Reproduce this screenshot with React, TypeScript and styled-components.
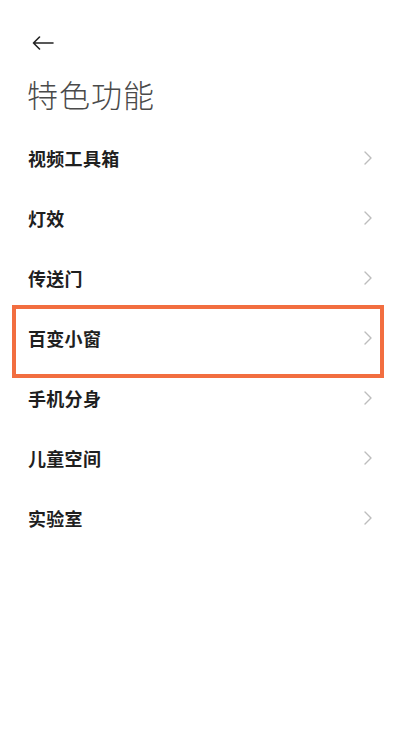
import React from 'react'
import styled, { createGlobalStyle } from 'styled-components'

const GlobalStyle = createGlobalStyle`
  html, body {
    margin: 0;
    padding: 0;
    background: #fff;
  }
  body {
    font-family: "Noto Sans CJK SC", "Noto Sans", sans-serif;
  }
`

const Page = styled.div`
  width: 401px;
  min-height: 755px;
  background: #fff;
`

const Header = styled.header`
  height: 128px;
  display: flex;
  flex-direction: column;
`

const BackButton = styled.button`
  margin: 32px 0 0 30px;
  width: 26px;
  height: 22px;
  padding: 0;
  border: none;
  background: none;
  display: flex;
  align-items: center;
  justify-content: center;
  color: #222;
`

const Title = styled.h1`
  margin: 18px 0 0 27px;
  font-size: 31px;
  line-height: 44px;
  font-weight: 300;
  color: #4a4a4a;
  letter-spacing: 1px;
`

const List = styled.ul`
  list-style: none;
  margin: 0;
  padding: 0;
`

const Row = styled.li<{ $highlight?: boolean }>`
  position: relative;
  height: 60px;
  display: flex;
  align-items: center;
  justify-content: space-between;
  padding: 0 29px 0 28px;

  ${({ $highlight }) =>
    $highlight &&
    `
    &::after {
      content: '';
      position: absolute;
      left: 12px;
      right: 17px;
      top: -3px;
      bottom: -10px;
      border: 4px solid #f26e40;
    }
  `}
`

const Label = styled.span`
  font-size: 18px;
  font-weight: 700;
  color: #1f1f1f;
  letter-spacing: 0.3px;
`

const Chevron = styled.svg`
  width: 8px;
  height: 14px;
  color: #bdbdbd;
`

const items = ['视频工具箱', '灯效', '传送门', '百变小窗', '手机分身', '儿童空间', '实验室']

const App: React.FunctionComponent = () => (
  <Page>
    <GlobalStyle />
    <Header>
      <BackButton aria-label="返回">
        <svg width="22" height="14" viewBox="0 0 22 14" fill="none">
          <path d="M21 7H1.5M7.5 1L1.5 7l6 6" stroke="currentColor" strokeWidth="1.6" strokeLinecap="round" strokeLinejoin="round" />
        </svg>
      </BackButton>
      <Title>特色功能</Title>
    </Header>
    <List>
      {items.map(item => (
        <Row key={item} $highlight={item === '百变小窗'}>
          <Label>{item}</Label>
          <Chevron viewBox="0 0 8 14" fill="none">
            <path d="M1 1l6 6-6 6" stroke="currentColor" strokeWidth="1.4" strokeLinecap="round" strokeLinejoin="round" />
          </Chevron>
        </Row>
      ))}
    </List>
  </Page>
)

export default App
